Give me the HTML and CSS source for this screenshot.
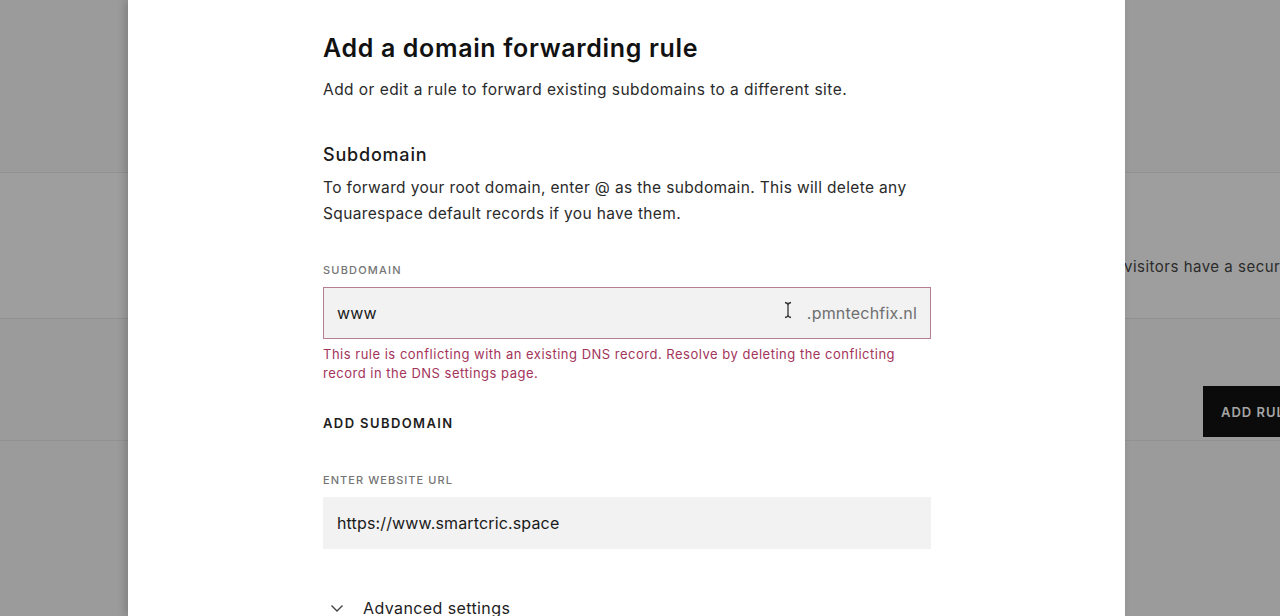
FILE: index.html
```html
<!DOCTYPE html>
<html lang="en">
<head>
    <meta charset="UTF-8">
    <meta name="viewport" content="width=device-width, initial-scale=1.0">
    <title>Domain forwarding</title>
    <link rel="stylesheet" href="styles.css">
</head>
<body>

<div class="backdrop-page">
    <div class="bg-section bg-top"></div>
    <div class="bg-section bg-ssl">
        <p>visitors have a secure connection.</p>
    </div>
    <div class="bg-section bg-rules">
        <button class="bg-button">ADD RULE</button>
    </div>
</div>

<div class="overlay">
    <div class="modal">
        <h2>Add a domain forwarding rule</h2>
        <p class="intro">Add or edit a rule to forward existing subdomains to a different site.</p>

        <h3>Subdomain</h3>
        <p class="help">To forward your root domain, enter @ as the subdomain. This will delete any Squarespace default records if you have them.</p>

        <label class="field-label">Subdomain</label>
        <div class="field has-error">
            <span class="field-value">www</span>
            <span class="caret-cursor">
                <svg width="10" height="18" viewBox="0 0 10 18">
                    <path d="M2 1.5 Q5 2 5 4 L5 14 Q5 16 2 16.5 M8 1.5 Q5 2 5 4 M5 14 Q5 16 8 16.5" fill="none" stroke="#333" stroke-width="1.3"/>
                </svg>
            </span>
            <span class="field-suffix">.pmntechfix.nl</span>
        </div>
        <p class="error">This rule is conflicting with an existing DNS record. Resolve by deleting the conflicting record in the DNS settings page.</p>

        <div class="add-link">ADD SUBDOMAIN</div>

        <label class="field-label">Enter website URL</label>
        <div class="field">
            <span class="field-value">https://www.smartcric.space</span>
        </div>

        <div class="advanced">
            <svg width="14" height="10" viewBox="0 0 14 10">
                <path d="M1.5 2.5 L7 8 L12.5 2.5" fill="none" stroke="#444" stroke-width="1.4"/>
            </svg>
            <span>Advanced settings</span>
        </div>
    </div>
</div>

</body>
</html>
```

FILE: styles.css
```css
* {
    box-sizing: border-box;
    margin: 0;
    padding: 0;
}

body {
    font-family: 'Inter', 'Noto Sans', sans-serif;
    background-color: #9b9b9b;
    height: 616px;
    overflow: hidden;
}

/* page behind the dialog, dimmed */
.backdrop-page {
    height: 616px;
    display: flex;
    flex-direction: column;
    overflow: hidden;
}

.bg-section {
    border-bottom: 1px solid #919191;
}

.bg-top {
    height: 173px;
}

.bg-ssl {
    height: 146px;
    background-color: #9e9e9e;
    padding-top: 84px;
    padding-left: 1124px;
    overflow: hidden;
}

.bg-ssl p {
    font-size: 15px;
    letter-spacing: 0.5px;
    color: #2b2b2b;
    white-space: nowrap;
}

.bg-rules {
    height: 122px;
    padding-top: 67px;
    padding-left: 1203px;
    overflow: hidden;
}

.bg-button {
    background-color: #0b0b0b;
    color: #a5a5a5;
    border: none;
    font-family: inherit;
    font-size: 13px;
    font-weight: 600;
    letter-spacing: 1px;
    width: 120px;
    height: 51px;
    padding-left: 18px;
    text-align: left;
}

.overlay {
    position: absolute;
    top: 0;
    left: 0;
    width: 1280px;
    height: 616px;
    padding-left: 128px;
}

.modal {
    width: 997px;
    height: 616px;
    background-color: #fff;
    padding: 32px 0 0 195px;
    box-shadow: -3px 0 8px rgba(0, 0, 0, 0.18);
    color: #1d1d1d;
}

.modal > * {
    width: 608px;
}

h2 {
    font-size: 25px;
    line-height: 32px;
    font-weight: 600;
    letter-spacing: 0.65px;
    color: #111;
}

.intro {
    margin-top: 14px;
    font-size: 15.5px;
    line-height: 24px;
    letter-spacing: 0.45px;
    color: #2a2a2a;
}

h3 {
    margin-top: 41px;
    font-size: 18px;
    line-height: 24px;
    font-weight: 500;
    letter-spacing: 0.8px;
    color: #1a1a1a;
}

.help {
    margin-top: 8px;
    font-size: 15.5px;
    line-height: 26px;
    letter-spacing: 0.35px;
    color: #2a2a2a;
}

.field-label {
    display: block;
    margin-top: 35px;
    font-size: 11px;
    line-height: 16px;
    font-weight: 500;
    letter-spacing: 1.2px;
    text-transform: uppercase;
    color: #757575;
}

.field {
    margin-top: 9px;
    height: 52px;
    background-color: #f2f2f2;
    display: flex;
    align-items: center;
    padding: 0 14px;
    font-size: 16px;
    letter-spacing: 0.15px;
    color: #1a1a1a;
}

.field.has-error {
    border: 1.5px solid #b57f8f;
    padding: 0 13px;
}

.field-value {
    flex: 1;
}

.caret-cursor {
    display: flex;
    margin-right: 14px;
    margin-top: -6px;
}

.field-suffix {
    color: #6f6f6f;
    letter-spacing: 0.2px;
}

.error {
    margin-top: 6px;
    font-size: 13px;
    line-height: 19px;
    letter-spacing: 0.5px;
    color: #a3345a;
}

.add-link {
    margin-top: 31px;
    font-size: 13px;
    line-height: 18px;
    font-weight: 600;
    letter-spacing: 1.4px;
    color: #1d1d1d;
}

.add-link + .field-label {
    margin-top: 40px;
    letter-spacing: 1.05px;
}

.advanced {
    margin-top: 47px;
    display: flex;
    align-items: center;
    gap: 19px;
    padding-left: 7px;
    font-size: 16px;
    line-height: 24px;
    letter-spacing: 0.4px;
    color: #1d1d1d;
}
```
